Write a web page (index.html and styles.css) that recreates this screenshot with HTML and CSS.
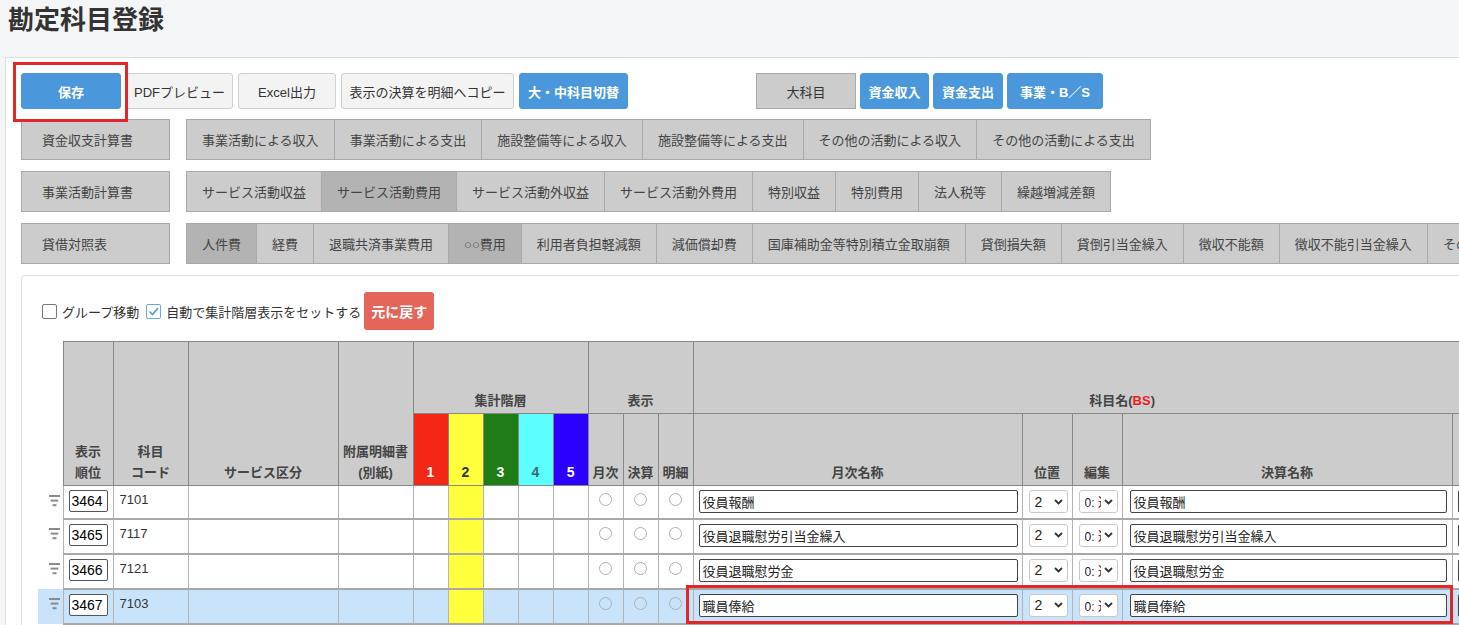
FILE: index.html
```html
<!DOCTYPE html>
<html lang="ja">
<head>
    <meta charset="UTF-8">
    <meta name="viewport" content="width=device-width, initial-scale=1.0">
    <title>勘定科目登録</title>
    <link rel="stylesheet" href="styles.css">
</head>
<body>
    <h1 class="page-title">勘定科目登録</h1>

    <div class="panel">
        <!-- action buttons -->
        <div class="toolbar">
            <div class="btn-group">
                <button class="btn btn-blue w-save">保存</button>
                <button class="btn btn-light w-pdf">PDFプレビュー</button>
                <button class="btn btn-light w-excel">Excel出力</button>
                <button class="btn btn-light w-copy">表示の決算を明細へコピー</button>
                <button class="btn btn-blue w-switch">大・中科目切替</button>
            </div>
            <div class="btn-group sub">
                <button class="btn btn-plain w-big">大科目</button>
                <button class="btn btn-blue w-in">資金収入</button>
                <button class="btn btn-blue w-out">資金支出</button>
                <button class="btn btn-blue w-bs">事業・B／S</button>
            </div>
        </div>

        <!-- statement tabs -->
        <div class="tab-row">
            <div class="tab-label">資金収支計算書</div>
            <div class="tabs">
                <span class="tab">事業活動による収入</span>
                <span class="tab">事業活動による支出</span>
                <span class="tab">施設整備等による収入</span>
                <span class="tab">施設整備等による支出</span>
                <span class="tab">その他の活動による収入</span>
                <span class="tab">その他の活動による支出</span>
            </div>
        </div>
        <div class="tab-row">
            <div class="tab-label">事業活動計算書</div>
            <div class="tabs">
                <span class="tab">サービス活動収益</span>
                <span class="tab active">サービス活動費用</span>
                <span class="tab">サービス活動外収益</span>
                <span class="tab">サービス活動外費用</span>
                <span class="tab">特別収益</span>
                <span class="tab">特別費用</span>
                <span class="tab">法人税等</span>
                <span class="tab">繰越増減差額</span>
            </div>
        </div>
        <div class="tab-row">
            <div class="tab-label">貸借対照表</div>
            <div class="tabs">
                <span class="tab active">人件費</span>
                <span class="tab">経費</span>
                <span class="tab">退職共済事業費用</span>
                <span class="tab active">○○費用</span>
                <span class="tab">利用者負担軽減額</span>
                <span class="tab">減価償却費</span>
                <span class="tab">国庫補助金等特別積立金取崩額</span>
                <span class="tab">貸倒損失額</span>
                <span class="tab">貸倒引当金繰入</span>
                <span class="tab">徴収不能額</span>
                <span class="tab">徴収不能引当金繰入</span>
                <span class="tab">その他の費用</span>
            </div>
        </div>

        <div class="card">
            <div class="options">
                <span class="cb"></span>
                <span class="opt-text first">グループ移動</span>
                <span class="cb on">
                    <svg width="13" height="13" viewBox="0 0 13 13"><path d="M2.5 6.5 L5.5 9.5 L11 3" fill="none" stroke="#4a9be0" stroke-width="1.6"/></svg>
                </span>
                <span class="opt-text">自動で集計階層表示をセットする</span>
                <button class="btn-undo">元に戻す</button>
            </div>

            <table class="grid">
                <colgroup>
                    <col style="width:25px">
                    <col style="width:50px">
                    <col style="width:75px">
                    <col style="width:150px">
                    <col style="width:75px">
                    <col style="width:35px"><col style="width:35px"><col style="width:35px"><col style="width:35px"><col style="width:35px">
                    <col style="width:35px"><col style="width:35px"><col style="width:35px">
                    <col style="width:329px">
                    <col style="width:50px">
                    <col style="width:50px">
                    <col style="width:330px">
                    <col style="width:99px">
                </colgroup>
                <thead>
                    <tr>
                        <th class="blank" rowspan="2"></th>
                        <th rowspan="2">表示<br>順位</th>
                        <th rowspan="2">科目<br>コード</th>
                        <th rowspan="2">サービス区分</th>
                        <th rowspan="2">附属明細書<br>(別紙)</th>
                        <th colspan="5">集計階層</th>
                        <th colspan="3">表示</th>
                        <th colspan="5">科目名(<span class="red">BS</span>)</th>
                    </tr>
                    <tr>
                        <th class="lv1">1</th>
                        <th class="lv2">2</th>
                        <th class="lv3">3</th>
                        <th class="lv4">4</th>
                        <th class="lv5">5</th>
                        <th>月次</th>
                        <th>決算</th>
                        <th>明細</th>
                        <th>月次名称</th>
                        <th>位置</th>
                        <th>編集</th>
                        <th>決算名称</th>
                        <th>略称</th>
                    </tr>
                </thead>
                <tbody>
                    <tr>
                        <td class="handle"><svg width="12" height="12" viewBox="0 0 12 12"><rect x="0" y="0" width="11" height="2" fill="#8a8a8a"/><rect x="1.7" y="4.6" width="7.6" height="2" fill="#8a8a8a"/><rect x="3.5" y="9.2" width="4" height="2" fill="#8a8a8a"/></svg></td>
                        <td class="c-order"><input class="order" value="3464"></td>
                        <td class="c-code">7101</td>
                        <td></td><td></td>
                        <td></td><td class="yel"></td><td></td><td></td><td></td>
                        <td><span class="radio"></span></td><td><span class="radio"></span></td><td><span class="radio"></span></td>
                        <td class="c-name"><input class="name" value="役員報酬"></td>
                        <td class="c-sel"><span class="sel"><span>2</span><svg width="9" height="6" viewBox="0 0 9 6"><path d="M1 1 L4.5 4.5 L8 1" fill="none" stroke="#333" stroke-width="1.8"/></svg></span></td>
                        <td class="c-sel"><span class="sel"><span class="cut">0: 通常</span><svg width="9" height="6" viewBox="0 0 9 6"><path d="M1 1 L4.5 4.5 L8 1" fill="none" stroke="#333" stroke-width="1.8"/></svg></span></td>
                        <td class="c-name2"><input class="name" value="役員報酬"></td>
                        <td class="c-extra"><input class="name" value=""></td>
                    </tr>
                    <tr>
                        <td class="handle"><svg width="12" height="12" viewBox="0 0 12 12"><rect x="0" y="0" width="11" height="2" fill="#8a8a8a"/><rect x="1.7" y="4.6" width="7.6" height="2" fill="#8a8a8a"/><rect x="3.5" y="9.2" width="4" height="2" fill="#8a8a8a"/></svg></td>
                        <td class="c-order"><input class="order" value="3465"></td>
                        <td class="c-code">7117</td>
                        <td></td><td></td>
                        <td></td><td class="yel"></td><td></td><td></td><td></td>
                        <td><span class="radio"></span></td><td><span class="radio"></span></td><td><span class="radio"></span></td>
                        <td class="c-name"><input class="name" value="役員退職慰労引当金繰入"></td>
                        <td class="c-sel"><span class="sel"><span>2</span><svg width="9" height="6" viewBox="0 0 9 6"><path d="M1 1 L4.5 4.5 L8 1" fill="none" stroke="#333" stroke-width="1.8"/></svg></span></td>
                        <td class="c-sel"><span class="sel"><span class="cut">0: 通常</span><svg width="9" height="6" viewBox="0 0 9 6"><path d="M1 1 L4.5 4.5 L8 1" fill="none" stroke="#333" stroke-width="1.8"/></svg></span></td>
                        <td class="c-name2"><input class="name" value="役員退職慰労引当金繰入"></td>
                        <td class="c-extra"><input class="name" value=""></td>
                    </tr>
                    <tr>
                        <td class="handle"><svg width="12" height="12" viewBox="0 0 12 12"><rect x="0" y="0" width="11" height="2" fill="#8a8a8a"/><rect x="1.7" y="4.6" width="7.6" height="2" fill="#8a8a8a"/><rect x="3.5" y="9.2" width="4" height="2" fill="#8a8a8a"/></svg></td>
                        <td class="c-order"><input class="order" value="3466"></td>
                        <td class="c-code">7121</td>
                        <td></td><td></td>
                        <td></td><td class="yel"></td><td></td><td></td><td></td>
                        <td><span class="radio"></span></td><td><span class="radio"></span></td><td><span class="radio"></span></td>
                        <td class="c-name"><input class="name" value="役員退職慰労金"></td>
                        <td class="c-sel"><span class="sel"><span>2</span><svg width="9" height="6" viewBox="0 0 9 6"><path d="M1 1 L4.5 4.5 L8 1" fill="none" stroke="#333" stroke-width="1.8"/></svg></span></td>
                        <td class="c-sel"><span class="sel"><span class="cut">0: 通常</span><svg width="9" height="6" viewBox="0 0 9 6"><path d="M1 1 L4.5 4.5 L8 1" fill="none" stroke="#333" stroke-width="1.8"/></svg></span></td>
                        <td class="c-name2"><input class="name" value="役員退職慰労金"></td>
                        <td class="c-extra"><input class="name" value=""></td>
                    </tr>
                    <tr class="sel-row">
                        <td class="handle"><svg width="12" height="12" viewBox="0 0 12 12"><rect x="0" y="0" width="11" height="2" fill="#8a8a8a"/><rect x="1.7" y="4.6" width="7.6" height="2" fill="#8a8a8a"/><rect x="3.5" y="9.2" width="4" height="2" fill="#8a8a8a"/></svg></td>
                        <td class="c-order"><input class="order" value="3467"></td>
                        <td class="c-code">7103</td>
                        <td></td><td></td>
                        <td></td><td class="yel"></td><td></td><td></td><td></td>
                        <td><span class="radio"></span></td><td><span class="radio"></span></td><td><span class="radio"></span></td>
                        <td class="c-name"><input class="name" value="職員俸給"></td>
                        <td class="c-sel"><span class="sel"><span>2</span><svg width="9" height="6" viewBox="0 0 9 6"><path d="M1 1 L4.5 4.5 L8 1" fill="none" stroke="#333" stroke-width="1.8"/></svg></span></td>
                        <td class="c-sel"><span class="sel"><span class="cut">0: 通常</span><svg width="9" height="6" viewBox="0 0 9 6"><path d="M1 1 L4.5 4.5 L8 1" fill="none" stroke="#333" stroke-width="1.8"/></svg></span></td>
                        <td class="c-name2"><input class="name" value="職員俸給"></td>
                        <td class="c-extra"><input class="name" value=""></td>
                    </tr>
                    <tr>
                        <td class="handle"></td>
                        <td class="c-order"><input class="order" value="3468"></td>
                        <td class="c-code">7104</td>
                        <td></td><td></td>
                        <td></td><td class="yel"></td><td></td><td></td><td></td>
                        <td></td><td></td><td></td>
                        <td class="c-name"></td><td></td><td></td><td class="c-name2"></td><td></td>
                    </tr>
                </tbody>
            </table>
        </div>
    </div>

    <!-- annotation frames -->
    <div class="mark mark-save"></div>
    <div class="mark mark-row"></div>
</body>
</html>
```

FILE: styles.css
```css
/* base */
* {
    box-sizing: border-box;
}

html, body {
    margin: 0;
    padding: 0;
}

body {
    background-color: #f4f5f7;
    font-family: "Liberation Sans", "Noto Sans CJK JP", sans-serif;
    font-size: 13px;
    color: #333;
    overflow: hidden;
}

.page-title {
    margin: 0;
    padding: 3px 8px 0;
    font-size: 26px;
    line-height: 34px;
    font-weight: bold;
    color: #333;
}

/* white work area */
.panel {
    margin: 20px 0 0 5px;
    width: 1700px;
    min-height: 700px;
    padding: 15px 0 0 15px;
    background-color: #fff;
    border-top: 1px solid #dcdde0;
    border-left: 1px solid #dcdde0;
}

/* buttons */
.toolbar {
    display: flex;
    height: 36px;
    margin-bottom: 10px;
}

.btn-group {
    display: flex;
    gap: 5px;
}

.btn-group.sub {
    margin-left: 128px;
    gap: 4px;
}

.btn {
    height: 36px;
    padding: 0;
    border-radius: 3px;
    font-family: inherit;
    font-size: 13px;
    white-space: nowrap;
}

.btn-blue {
    background-color: #4a98db;
    border: 1px solid #4a98db;
    color: #fff;
    font-weight: bold;
}

.btn-light {
    background-color: #f3f3f3;
    border: 1px solid #cfcfcf;
    color: #333;
}

.btn-plain {
    background-color: #ccc;
    border: 1px solid #a8a8a8;
    border-radius: 0;
    color: #333;
}

.w-save { width: 100px; }
.w-pdf { width: 107px; }
.w-excel { width: 98px; }
.w-copy { width: 173px; }
.w-switch { width: 109px; }
.w-big { width: 100px; }
.w-in { width: 69px; }
.w-out { width: 70px; }
.w-bs { width: 96px; }

/* statement tabs */
.tab-row {
    display: flex;
    height: 41px;
    margin-bottom: 11px;
}

.tab-label {
    flex: none;
    width: 149px;
    display: flex;
    align-items: center;
    padding-left: 20px;
    background-color: #ccc;
    border: 1px solid #a9a9a9;
    color: #444;
}

.tabs {
    flex: none;
    display: flex;
    margin-left: 16px;
    border: 1px solid #a9a9a9;
    border-right: none;
}

.tab {
    flex: none;
    display: flex;
    align-items: center;
    padding: 0 15px;
    background-color: #ccc;
    border-right: 1px solid #a9a9a9;
    color: #444;
    white-space: nowrap;
}

.tab.active {
    background-color: #b3b3b3;
}

/* inner card */
.card {
    width: 1660px;
    min-height: 400px;
    padding: 16px 0 0 16px;
    background-color: #fff;
    border: 1px solid #ddd;
    border-radius: 4px;
}

.options {
    display: flex;
    align-items: center;
    height: 38px;
    margin-left: 4px;
}

.cb {
    width: 15px;
    height: 15px;
    display: flex;
    align-items: center;
    justify-content: center;
    border: 1px solid #777;
    border-radius: 2px;
    background-color: #fff;
}

.cb.on {
    border-color: #6aa9dd;
}

.opt-text {
    margin: 0 3px 0 5px;
    white-space: nowrap;
}

.opt-text.first {
    margin-right: 7px;
}

.btn-undo {
    width: 70px;
    height: 38px;
    padding: 0;
    border: none;
    border-radius: 3px;
    background-color: #e4665a;
    color: #fff;
    font-family: inherit;
    font-size: 14px;
    font-weight: bold;
}

/* grid */
.grid {
    margin-top: 11px;
    width: 1513px;
    table-layout: fixed;
    border-collapse: collapse;
}

.grid th {
    height: 72px;
    padding: 0 2px 2px;
    background-color: #ccc;
    border: 1px solid #888;
    color: #444;
    font-size: 13px;
    font-weight: bold;
    line-height: 21px;
    vertical-align: bottom;
    white-space: nowrap;
}

.grid th.blank {
    background: none;
    border: none;
}

.red {
    color: #f01c1c;
}

.grid th.lv1 { background-color: #f32617; color: #fff; font-size: 14px; }
.grid th.lv2 { background-color: #ffff3c; color: #333; font-size: 14px; }
.grid th.lv3 { background-color: #1f7d17; color: #fff; font-size: 14px; }
.grid th.lv4 { background-color: #5cfffd; color: #356b6b; font-size: 14px; }
.grid th.lv5 { background-color: #2b00ff; color: #fff; font-size: 14px; }

.grid td {
    height: 35px;
    padding: 4px 5px 0;
    border-top: 2px solid #a8a8a8;
    border-left: 1px solid #b4b4b4;
    border-right: 1px solid #b4b4b4;
    vertical-align: top;
    background-color: #fff;
}

.grid tbody tr:first-child td {
    height: 33px;
    border-top: 1px solid #888;
}

.grid tbody tr td.handle {
    border: none;
    padding: 9px 0 0 11px;
}

.grid td.yel {
    background-color: #ffff3c;
}

.grid tr.sel-row td {
    background-color: #c9e3fb;
}

.grid tr.sel-row td.yel {
    background-color: #ffff3c;
}

.c-code {
    padding-left: 6px !important;
    padding-top: 6px !important;
    color: #333;
}

.order {
    width: 39px;
    height: 22px;
    padding: 0 2px;
    border: 1px solid #555;
    border-radius: 2px;
    font-family: inherit;
    font-size: 14px;
    color: #000;
}

.radio {
    display: block;
    width: 13px;
    height: 13px;
    margin: 3px auto 0;
    border: 1px solid #b0b0b0;
    border-radius: 50%;
    background-color: #fff;
}

.sel-row .radio {
    background-color: transparent;
}

.name {
    width: 100%;
    height: 23px;
    padding: 0 3px;
    border: 1px solid #444;
    border-radius: 2px;
    font-family: inherit;
    font-size: 13px;
    color: #222;
    background-color: #fff;
}

.grid td.c-name {
    padding: 4px 4px 0 5px;
}

.grid td.c-name2 {
    padding: 4px 5px 0 7px;
}

.grid td.c-sel {
    padding: 4px 4px 0 6px;
}

.grid td.c-extra {
    padding: 4px 0 0 5px;
}

.sel {
    display: flex;
    align-items: center;
    justify-content: space-between;
    width: 39px;
    height: 23px;
    padding: 0 4px 0 5px;
    border: 1px solid #c8c8c8;
    border-radius: 3px;
    background-color: #fff;
    font-size: 14px;
    color: #222;
}

.sel .cut {
    width: 16px;
    overflow: hidden;
    white-space: nowrap;
    font-size: 12px;
}

/* red annotation frames */
.mark {
    position: absolute;
    border: 3px solid #e3262b;
    pointer-events: none;
}

.mark-save {
    left: 13px;
    top: 62px;
    width: 115px;
    height: 60px;
}

.mark-row {
    left: 686px;
    top: 585px;
    width: 767px;
    height: 39px;
}
```
